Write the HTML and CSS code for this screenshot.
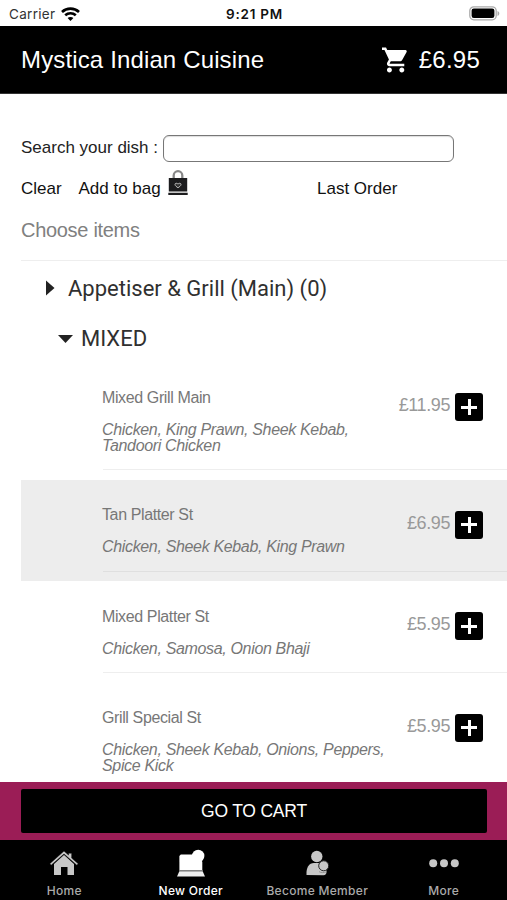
FILE: index.html
```html
<!DOCTYPE html>
<html lang="en">
<head>
<meta charset="utf-8">
<title>Mystica Indian Cuisine</title>
<link rel="stylesheet" href="styles.css">
</head>
<body>
<div class="app">
  <div class="status">
    <div class="carrier"><span>Carrier</span>
      <svg width="19" height="14" viewBox="0 0 19 14" fill="none" stroke="#000" stroke-width="2.6"><path d="M1 5C5.7.5 13.3.5 18 5M4.2 8.3c3-2.8 7.6-2.8 10.6 0"/><path d="M9.5 14 6.6 11.1c1.6-1.5 4.2-1.5 5.8 0z" fill="#000" stroke="none"/></svg>
    </div>
    <div class="clock">9:21 PM</div>
    <svg class="battery" width="31" height="15" viewBox="0 0 31 15"><rect x=".8" y=".8" width="26.4" height="13" rx="4" fill="#fff" stroke="#aaa" stroke-width="1.3"/><rect x="2.6" y="2.6" width="22.8" height="9.4" rx="2.2"/><path d="M28.5 5v5c2.4-.7 2.4-4.3 0-5z" fill="#aaa"/></svg>
  </div>
  <header class="header">
    <h1>Mystica Indian Cuisine</h1>
    <div class="basket">
      <svg width="26" height="26" viewBox="1 2 21 20" fill="#fff"><path d="M7 18c-1.1 0-1.99.9-1.99 2S5.900 22 7 22s2-.9 2-2-.9-2-2-2zM1 2v2h2l3.600 7.590-1.350 2.450c-.16.280-.25.610-.25.960 0 1.100.9 2 2 2h12v-2H7.420c-.14 0-.25-.11-.25-.25l.03-.12.9-1.630h7.450c.75 0 1.410-.41 1.750-1.030l3.580-6.490A1 1 0 0 0 20.010 4H5.210l-.94-2H1zm16 16c-1.100 0-1.990.9-1.990 2s.89 2 1.990 2 2-.9 2-2-.9-2-2-2z"/></svg>
      <span>£6.95</span>
    </div>
  </header>
  <main class="content">
    <div class="search"><label for="dish">Search your dish :</label><input id="dish" type="text"></div>
    <div class="actions">
      <span class="clear">Clear</span><span class="add">Add to bag</span>
      <svg width="20" height="26" viewBox="0 0 20 26"><path d="M5.700 10V5.500a4.300 4.300 0 0 1 8.600 0V10" fill="none" stroke="#888" stroke-width="2.300"/><path d="M.8 8h18.400v13.600H.8zM.3 22.800h19.400V25H.3z" fill="#1c1c1e"/><path d="M7 14.500c0-1.600 2.200-1.600 3-.3.800-1.300 3-1.300 3 .3 0 1.400-1.800 2.300-3 3.300-1.200-1-3-1.900-3-3.300z" fill="#333" stroke="#bbb"/></svg>
      <span class="last">Last Order</span>
    </div>
    <h2 class="choose">Choose items</h2>
    <div class="category"><svg width="9" height="16" viewBox="0 0 9 16"><path d="M0 .5 8.500 8 0 15.500z" fill="#222"/></svg><span>Appetiser &amp; Grill (Main) (0)</span></div>
    <div class="category open"><svg width="15" height="8" viewBox="0 0 15 8"><path d="M0 0h15L7.500 8z" fill="#222"/></svg><span>MIXED</span></div>
    <section class="items">
      <article class="item tall">
        <div class="info"><h3>Mixed Grill Main</h3><p>Chicken, King Prawn, Sheek Kebab,<br>Tandoori Chicken</p></div>
        <span class="price">£11.95</span><button class="plus" aria-label="Add Mixed Grill Main"></button>
      </article>
      <article class="item shaded">
        <div class="info"><h3>Tan Platter St</h3><p>Chicken, Sheek Kebab, King Prawn</p></div>
        <span class="price">£6.95</span><button class="plus" aria-label="Add Tan Platter St"></button>
      </article>
      <article class="item">
        <div class="info"><h3>Mixed Platter St</h3><p>Chicken, Samosa, Onion Bhaji</p></div>
        <span class="price">£5.95</span><button class="plus" aria-label="Add Mixed Platter St"></button>
      </article>
      <article class="item tall">
        <div class="info"><h3>Grill Special St</h3><p>Chicken, Sheek Kebab, Onions, Peppers,<br>Spice Kick</p></div>
        <span class="price">£5.95</span><button class="plus" aria-label="Add Grill Special St"></button>
      </article>
    </section>
  </main>
  <div class="checkout"><button>GO TO CART</button></div>
  <nav class="tabs">
    <div class="tab"><svg width="30" height="28" viewBox="0 0 30 28" fill="#c7c7c7"><path d="M5 15 15 6l10 9v11h-6.500v-8h-6.500v8H5z"/><path d="M.8 14.700 15 2l4.500 4V4.200h3.200v4.900l6.500 5.600-1.300 1.600L15 5 2.100 16.300z" stroke="#000" stroke-width=".5"/></svg><span class="home">Home</span></div>
    <div class="tab active"><svg width="30" height="28" viewBox="0 0 30 28" fill="#fff"><path d="M4.800 5.500h18.500L26.300 13v8.200H3.400V7z"/><circle cx="22.200" cy="7" r="6.200"/><path d="M3.300 22.200h23.400l2.300 5.300H1z" fill="#eee"/><path d="M3 21.600h24" stroke="#aaa" stroke-width=".7"/></svg><span>New Order</span></div>
    <div class="tab"><svg width="30" height="28" viewBox="0 0 30 28" fill="#c7c7c7"><path d="M4.500 26C4 18.500 7 14 12 14h5c5 0 7.500 4.500 7.500 9 0 2-1 3.200-3 3.200z"/><circle cx="14.800" cy="7.500" r="5.700"/><circle cx="21.700" cy="16.800" r="5" stroke="#222"/><path d="M17 22.600c2 1.300 5 1.300 7.500.2" fill="none" stroke="#888" stroke-width=".8"/></svg><span>Become Member</span></div>
    <div class="tab"><svg width="30" height="28" viewBox="0 0 30 28" fill="#c7c7c7"><circle cx="4.200" cy="14.200" r="4"/><circle cx="15" cy="14.200" r="4"/><circle cx="25.800" cy="14.200" r="4"/></svg><span class="more">More</span></div>
  </nav>
</div>
</body>
</html>
```
FILE: styles.css
```css
* { box-sizing: border-box; }
body { margin: 0; background: #fff; font-family: "Liberation Sans", Arial, sans-serif; color: #222; }
h1, h2, h3, p { margin: 0; font-weight: 400; }
.app { width: 507px; height: 900px; display: flex; flex-direction: column; overflow: hidden; white-space: nowrap; }

.status { flex: none; height: 26px; display: grid; grid-template-columns: 1fr auto 1fr; align-items: center; padding: 1px 7px 0 9px; font-family: Inter, sans-serif; font-size: 13.5px; line-height: 20px; }
.carrier { display: flex; align-items: center; gap: 6px; color: #333; font-size: 13.5px; letter-spacing: 0.3px; }
.clock { font-weight: 600; color: #111; letter-spacing: 0.75px; }
.battery { justify-self: end; }

.header { flex: none; height: 68px; background: #000; color: #fff; display: flex; align-items: center; justify-content: space-between; padding: 0 27px 0 21px; border-bottom: 1px solid #333; }
.header h1 { font-size: 24px; line-height: 30px; letter-spacing: 0.14px; }
.basket { display: flex; align-items: center; gap: 11px; font-size: 24px; letter-spacing: 0.25px; }

.content { flex: 1; min-height: 0; overflow: hidden; padding: 40px 0 0 21px; }
.search { display: flex; align-items: center; height: 28px; font-size: 17px; }
.search label { width: 142px; padding-bottom: 1px; }
.search input { width: 291px; height: 27px; border: 1.5px solid #777; border-radius: 6px; background: #fff; box-shadow: inset 0 1px 1px #ddd; padding: 0 6px; }
.actions { display: flex; align-items: center; height: 40px; margin-top: 7px; font-size: 17px; color: #111; }
.clear { width: 57.5px; }
.add { width: 89.500px; }
.actions svg { margin-bottom: 12px; }
.last { margin-left: 129px; }
.choose { height: 52px; padding-top: 9px; font-size: 20px; line-height: 24px; letter-spacing: -0.3px; color: #808080; border-bottom: 1px solid #eee; }
.category { display: flex; align-items: center; height: 54px; padding-left: 25px; font-family: Roboto, sans-serif; font-size: 22px; color: #303030; }
.category span { margin-left: 13px; }
.category.open { height: 47px; padding-left: 37px; }
.category.open span { margin-left: 8px; }

.item { display: flex; height: 101.5px; padding-bottom: 10px; }
.item.tall { height: 117.5px; }
.item.shaded { background: #ededed; }
.item:before { content: ""; width: 82px; }
.item { position: relative; }
.item:after { content: ""; position: absolute; left: 82px; right: 0; bottom: 9.5px; height: 1px; background: #eee; }
.item.shaded:after { background: #dfdfdf; }
.info { width: 282px; margin-left: -1px; padding-top: 27.5px; font-size: 16px; line-height: 16px; color: #777; }
.info h3 { font-size: 16px; line-height: 16px; margin-bottom: 16px; letter-spacing: -0.38px; }
.info p { font-style: italic; letter-spacing: -0.34px; }
.price { width: 66px; padding-top: 33px; text-align: right; font-size: 18px; line-height: 20px; color: #999; letter-spacing: -0.4px; }
.plus { width: 28px; height: 28px; margin: 31px 0 0 5px; padding: 0; border: 0; border-radius: 3px; background: linear-gradient(#fff, #fff) center / 16px 3px no-repeat, linear-gradient(#fff, #fff) center / 3px 16px no-repeat, #000; }

.checkout { flex: none; height: 58px; background: #9b1d56; padding: 7px 20px 7px 21px; }
.checkout button { width: 100%; height: 44px; border: 0; border-radius: 2px; background: #000; color: #fff; font: 17.500px/44px "Liberation Sans", Arial, sans-serif; letter-spacing: -0.2px; padding: 0; }
.tabs { flex: none; height: 60px; background: #000; display: grid; grid-template-columns: repeat(4, 1fr); padding-left: 1px; }
.tab { display: flex; flex-direction: column; align-items: center; padding-top: 9px; color: #aaa; font: 500 12px/16px Inter, sans-serif; letter-spacing: 0.3px; }
.tab span { margin-top: 6px; }
.tab.active { color: #fff; }
```
